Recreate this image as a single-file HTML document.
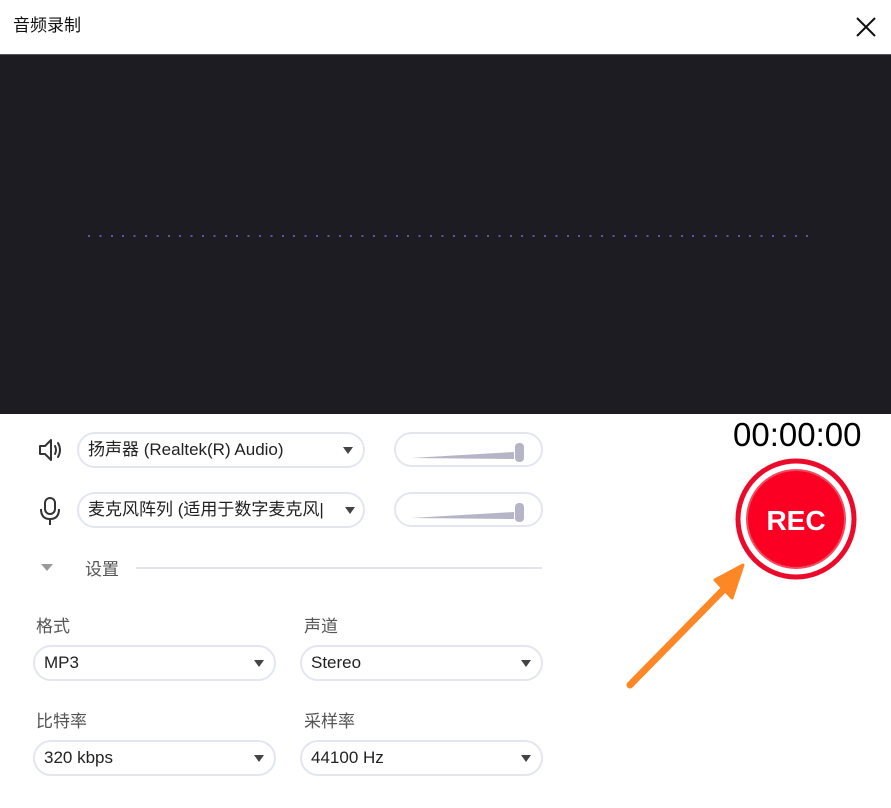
<!DOCTYPE html>
<html><head><meta charset="utf-8"><style>
*{margin:0;padding:0;box-sizing:border-box}
body{width:891px;height:808px;background:#fff;position:relative;overflow:hidden;font-family:"Liberation Sans","Noto Sans CJK SC",sans-serif;color:#222}
.abs{position:absolute}
.dd{position:absolute;border:2px solid #e3e6ef;border-radius:18px;background:#fff;font-size:17px;line-height:32px;padding-left:9px;color:#222;white-space:nowrap;overflow:hidden}
.dd .ar{position:absolute;right:10px;top:13px;width:0;height:0;border-left:5px solid transparent;border-right:5px solid transparent;border-top:7px solid #444}
.lbl{position:absolute;font-size:17px;color:#555}
.sl{position:absolute;border:2px solid #e3e6ef;border-radius:18px;background:#fff;width:149px;height:35px}
</style></head><body>
<div class="abs" style="left:13px;top:11px;font-size:17px;color:#111">音频录制</div>
<svg class="abs" style="left:855px;top:16px" width="22" height="22"><path d="M2 2L20 20M20 2L2 20" stroke="#111" stroke-width="2"/></svg>
<div class="abs" style="left:0;top:54px;width:891px;height:1px;background:#555"></div>
<div class="abs" style="left:0;top:55px;width:891px;height:359px;background:#1d1c22"></div>
<div class="abs" style="left:88px;top:235px;width:724px;height:2px;background:repeating-linear-gradient(90deg,#5b56a3 0 2px,transparent 2px 11.4px)"></div>

<svg class="abs" style="left:37px;top:437px" width="28" height="26" viewBox="0 0 28 26"><path d="M3 9H8L14 3V23L8 17H3Z" fill="none" stroke="#333" stroke-width="2" stroke-linejoin="round"/><path d="M18 9Q20 13 18 17M21 6Q25 13 21 20" fill="none" stroke="#333" stroke-width="2" stroke-linecap="round"/></svg>
<div class="dd" style="left:77px;top:432px;width:288px;height:36px">扬声器 (Realtek(R) Audio)<span class="ar"></span></div>
<div class="sl" style="left:394px;top:432px"><svg width="149" height="35" style="position:absolute;left:-2px;top:-2px"><path d="M17 26L120 20V27Z" fill="#b6b5c8"/><rect x="121" y="11" width="9" height="19" rx="4" fill="#b6b5c8"/></svg></div>

<svg class="abs" style="left:39px;top:496px" width="22" height="30" viewBox="0 0 22 30"><rect x="6" y="2" width="10" height="16" rx="5" fill="none" stroke="#333" stroke-width="2"/><path d="M2 13Q2 23 11 23Q20 23 20 13M11 23V29" fill="none" stroke="#333" stroke-width="2"/></svg>
<div class="dd" style="left:77px;top:492px;width:288px;height:36px">麦克风阵列 (适用于数字麦克风|<span class="ar" style="right:8px"></span></div>
<div class="sl" style="left:394px;top:492px"><svg width="149" height="35" style="position:absolute;left:-2px;top:-2px"><path d="M17 26L120 20V27Z" fill="#b6b5c8"/><rect x="121" y="11" width="9" height="19" rx="4" fill="#b6b5c8"/></svg></div>

<div class="abs" style="left:41px;top:564px;width:0;height:0;border-left:6px solid transparent;border-right:6px solid transparent;border-top:7px solid #999"></div>
<div class="lbl" style="left:85px;top:555px">设置</div>
<div class="abs" style="left:136px;top:567px;width:406px;height:2px;background:#e3e3ea"></div>

<div class="lbl" style="left:36px;top:612px">格式</div>
<div class="lbl" style="left:304px;top:612px">声道</div>
<div class="dd" style="left:33px;top:645px;width:243px;height:36px">MP3<span class="ar"></span></div>
<div class="dd" style="left:300px;top:645px;width:243px;height:36px">Stereo<span class="ar"></span></div>
<div class="lbl" style="left:36px;top:707px">比特率</div>
<div class="lbl" style="left:304px;top:707px">采样率</div>
<div class="dd" style="left:33px;top:740px;width:243px;height:36px">320 kbps<span class="ar"></span></div>
<div class="dd" style="left:300px;top:740px;width:243px;height:36px">44100 Hz<span class="ar"></span></div>

<div class="abs" style="left:733px;top:416px;font-size:33px;color:#000">00:00:00</div>
<svg class="abs" style="left:730px;top:455px" width="130" height="130"><circle cx="66" cy="64" r="58" fill="none" stroke="#ec0a2a" stroke-width="5"/><circle cx="66" cy="64" r="49" fill="#fb0022" stroke="#f04a60" stroke-width="2"/><text x="66" y="75" text-anchor="middle" font-family="Liberation Sans" font-weight="bold" font-size="28" fill="#fff">REC</text></svg>
<svg class="abs" style="left:620px;top:555px" width="130" height="140"><path d="M10 130L110 28" stroke="#fd8625" stroke-width="7" stroke-linecap="round"/><path d="M123 10L95 25L112 43Z" fill="#fd8625" stroke="#fd8625" stroke-width="3" stroke-linejoin="round"/></svg>
</body></html>
